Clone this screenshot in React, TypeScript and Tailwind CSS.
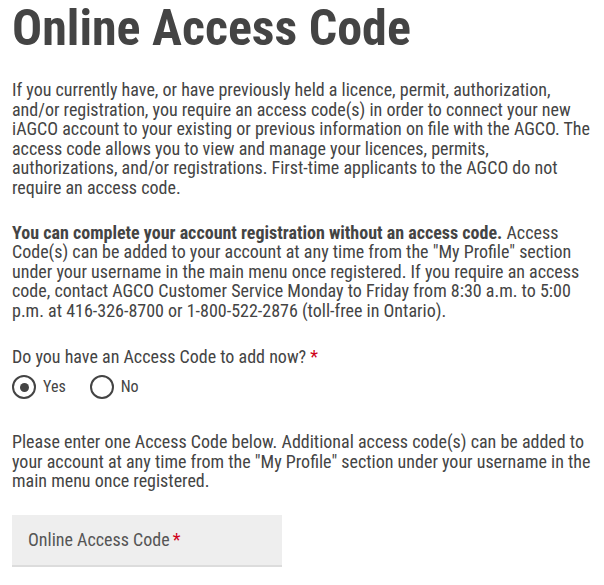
export default function App() {
  return (
    <main
      className="min-h-screen bg-white px-3 text-[#444] font-stretch-condensed"
      style={{ fontFamily: "Roboto, 'Liberation Sans', sans-serif" }}
    >
      <h1 className="text-[50px] font-bold leading-[57px] text-[#444]">
        Online Access Code
      </h1>

      <p className="mt-[23px] text-[18px] leading-[19.6px]">
        If you currently have, or have previously held a licence, permit, authorization,
        and/or registration, you require an access code(s) in order to connect your new
        iAGCO account to your existing or previous information on file with the AGCO. The
        access code allows you to view and manage your licences, permits,
        authorizations, and/or registrations. First-time applicants to the AGCO do not
        require an access code.
      </p>

      <p className="mt-[25px] text-[18px] leading-[19.6px]">
        <strong className="font-bold">
          You can complete your account registration without an access code.
        </strong>{" "}
        Access Code(s) can be added to your account at any time from the "My Profile"
        section under your username in the main menu once registered. If you require an
        access code, contact AGCO Customer Service Monday to Friday from 8:30 a.m. to 5:00
        p.m. at 416-326-8700 or 1-800-522-2876 (toll-free in Ontario).
      </p>

      <fieldset className="mt-[26px]">
        <legend className="text-[18px] leading-[19.6px]">
          Do you have an Access Code to add now? <span className="text-[#d0021b]">*</span>
        </legend>
        <div className="mt-[9px] flex items-center gap-[24px]">
          <RadioOption label="Yes" checked />
          <RadioOption label="No" />
        </div>
      </fieldset>

      <p className="mt-[33px] text-[18px] leading-[19.6px]">
        Please enter one Access Code below. Additional access code(s) can be added to
        your account at any time from the "My Profile" section under your username in the
        main menu once registered.
      </p>

      <div className="mt-[24px] flex h-[52px] w-[270px] items-center border-b-2 border-[#dcdcdc] bg-[#eeeeee] px-4">
        <span className="text-[18px] text-[#555]">
          Online Access Code<span className="ml-[3px] text-[#d0021b]">*</span>
        </span>
      </div>
    </main>
  );
}

function RadioOption({ label, checked = false }: { label: string; checked?: boolean }) {
  return (
    <label className="flex items-center gap-[7px] text-[16px]">
      <span className="flex h-[24px] w-[24px] items-center justify-center rounded-full border-2 border-[#444]">
        {checked ? <span className="h-[9px] w-[9px] rounded-full bg-[#444]" /> : null}
      </span>
      {label}
    </label>
  );
}
